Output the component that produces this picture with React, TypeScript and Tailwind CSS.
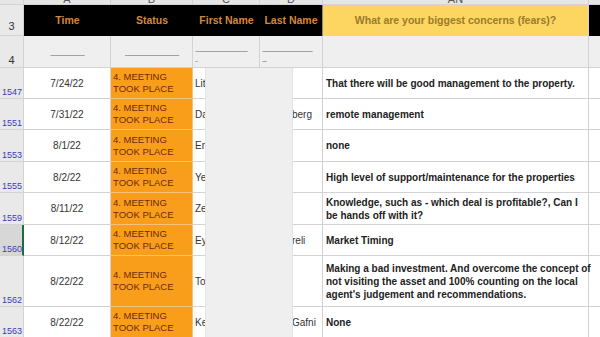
import React from 'react';

type Row = {
  n: string;
  h: string;
  time: string;
  first: string;
  last?: string;
  text: string[];
  sel?: boolean;
};

const rows: Row[] = [
  { n: '1547', h: 'h-[31px]', time: '7/24/22', first: 'Lit', text: ['That there will be good management to the property.'] },
  { n: '1551', h: 'h-[31px]', time: '7/31/22', first: 'Da', last: 'berg', text: ['remote management'] },
  { n: '1553', h: 'h-[32px]', time: '8/1/22', first: 'Er', text: ['none'] },
  { n: '1555', h: 'h-[31px]', time: '8/2/22', first: 'Ye', text: ['High level of support/maintenance for the properties'] },
  {
    n: '1559',
    h: 'h-[32px]',
    time: '8/11/22',
    first: 'Ze',
    text: ['Knowledge, such as - which deal is profitable?, Can I', 'be hands off with it?'],
  },
  { n: '1560', h: 'h-[31px]', time: '8/12/22', first: 'Ey', last: 'reli', text: ['Market Timing'], sel: true },
  {
    n: '1562',
    h: 'h-[51px]',
    time: '8/22/22',
    first: 'To',
    text: [
      'Making a bad investment. And overcome the concept of',
      'not visiting the asset and 100% counting on the local',
      "agent's judgement and recommendations.",
    ],
  },
  { n: '1563', h: 'h-[31px]', time: '8/22/22', first: 'Ke', last: 'Gafni', text: ['None'] },
];

const line = 'border-r border-b border-[#d3d3d3]';

export default function App() {
  return (
    <div className="relative w-[600px] h-[337px] overflow-hidden bg-white font-['Liberation_Sans',Arial,sans-serif] text-[10px] text-[#222]">
      {/* column letters, cut off at the top */}
      <div className="flex h-[5px] bg-[#e6e6e6] text-[11px] text-[#555] leading-none">
        <div className={`w-[24px] shrink-0 ${line}`} />
        <div className={`w-[87px] shrink-0 ${line} flex items-end justify-center overflow-hidden`}>
          <span className="mb-[-1px]">A</span>
        </div>
        <div className={`w-[82px] shrink-0 ${line} flex items-end justify-center overflow-hidden`}>
          <span className="mb-[-1px]">B</span>
        </div>
        <div className={`w-[67px] shrink-0 ${line} flex items-end justify-center overflow-hidden`}>
          <span className="mb-[-1px]">C</span>
        </div>
        <div className={`w-[63px] shrink-0 ${line} flex items-end justify-center overflow-hidden`}>
          <span className="mb-[-1px]">D</span>
        </div>
        <div className={`w-[266px] shrink-0 ${line} flex items-end justify-center overflow-hidden`}>
          <span className="mb-[-1px]">AN</span>
        </div>
        <div className="w-[11px] shrink-0 border-b border-[#d3d3d3]" />
      </div>

      {/* row 3: headers */}
      <div className="flex h-[31px] font-bold text-[10.5px]">
        <div className={`w-[24px] shrink-0 ${line} bg-[#e9e9e9] flex items-end justify-center pb-[1px] text-[11px] font-normal text-[#333]`}>
          3
        </div>
        <div className="w-[87px] shrink-0 bg-black flex items-center justify-center text-[#d4883c]">Time</div>
        <div className="w-[82px] shrink-0 bg-black flex items-center justify-center text-[#d4883c]">Status</div>
        <div className="w-[67px] shrink-0 bg-black flex items-center justify-center text-[#d4883c]">First Name</div>
        <div className="w-[63px] shrink-0 bg-black flex items-center justify-center text-[#d4883c] border-r border-[#888]">
          Last Name
        </div>
        <div className="w-[266px] shrink-0 bg-[#fcd660] flex items-center justify-center text-[#9a7b2b] border-r border-[#d3d3d3]">
          What are your biggest concerns (fears)?
        </div>
        <div className="w-[11px] shrink-0 bg-black" />
      </div>

      {/* row 4: dashes */}
      <div className="flex h-[32px] bg-[#efefef] text-[#8a8a8a] text-[9px] leading-[8px]">
        <div className={`w-[24px] shrink-0 ${line} bg-[#e9e9e9] flex items-end justify-center pb-[1px] text-[11px] leading-none text-[#333]`}>
          4
        </div>
        <div className={`w-[87px] shrink-0 ${line} flex items-center justify-center pt-[6px]`}>
          <span className="tracking-[-1px]">-----------------</span>
        </div>
        <div className={`w-[82px] shrink-0 ${line} flex items-center justify-center pt-[6px]`}>
          <span className="tracking-[-1px]">---------------------------</span>
        </div>
        <div className={`w-[67px] shrink-0 ${line} flex flex-col justify-center gap-[2px] pl-[2px] pt-[8px]`}>
          <span className="tracking-[-1px] whitespace-nowrap">--------------------------</span>
          <span>-</span>
        </div>
        <div className={`w-[63px] shrink-0 ${line} flex flex-col justify-center gap-[2px] pl-[2px] pt-[8px]`}>
          <span className="tracking-[-1px] whitespace-nowrap">-------------------------</span>
          <span className="tracking-[-1px]">--</span>
        </div>
        <div className={`w-[266px] shrink-0 ${line}`} />
        <div className="w-[11px] shrink-0 border-b border-[#d3d3d3]" />
      </div>

      {/* data rows */}
      {rows.map((r) => (
        <div key={r.n} className={`flex ${r.h}`}>
          <div
            className={`w-[24px] shrink-0 border-b border-[#d3d3d3] flex items-end pl-[2px] pb-[1px] text-[9px] leading-none text-[#3c3cb4] ${
              r.sel ? 'bg-[#d7d7d7] border-r-2 border-r-[#1e6b3f]' : 'bg-[#e9e9e9] border-r'
            }`}
          >
            {r.n}
          </div>
          <div className={`w-[87px] shrink-0 ${line} flex items-center justify-center text-[#333]`}>{r.time}</div>
          <div className="w-[82px] shrink-0 border-r border-b border-[#f3c27a] bg-[#f99e1a] flex flex-col justify-center pl-[2px] text-[9.5px] leading-[12px] text-[#6e2a0c]">
            <span>4. MEETING</span>
            <span>TOOK PLACE</span>
          </div>
          <div className={`w-[67px] shrink-0 ${line} flex items-center pl-[2px] text-[#333]`}>{r.first}</div>
          <div className={`w-[63px] shrink-0 ${line} flex items-center pl-[32px] text-[#333]`}>{r.last ?? ''}</div>
          <div className={`w-[266px] shrink-0 ${line} flex flex-col justify-center pl-[3px] font-bold leading-[13px] text-[#222]`}>
            {r.text.map((t) => (
              <span key={t} className="whitespace-nowrap">
                {t}
              </span>
            ))}
          </div>
          <div className="w-[11px] shrink-0 border-b border-[#d3d3d3]" />
        </div>
      ))}

      {/* redacted block over names */}
      <div className="absolute left-[205px] top-[68px] bottom-0 w-[88px] bg-[#efefef] border-x border-[#e4e4e4]" />
    </div>
  );
}
